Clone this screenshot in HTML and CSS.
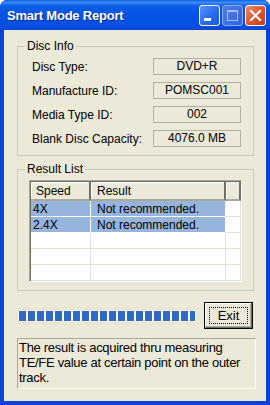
FILE: index.html
```html
<!DOCTYPE html>
<html lang="en">
<head>
  <meta charset="UTF-8">
  <title>Smart Mode Report</title>
  <link rel="stylesheet" href="styles.css">
</head>
<body>
  <div class="window">
    <div class="titlebar">
      <span class="title">Smart Mode Report</span>
      <div class="caption-buttons">
        <span class="cap-btn">
          <svg width="21" height="21" viewBox="0 0 21 21"><rect x="5" y="13" width="7" height="3" fill="#fff"/></svg>
        </span>
        <span class="cap-btn disabled">
          <svg width="21" height="21" viewBox="0 0 21 21"><rect x="5.5" y="5.5" width="10" height="10" fill="none" stroke="#a9bdf0" stroke-width="1"/><rect x="5" y="5" width="11" height="2" fill="#a9bdf0"/></svg>
        </span>
        <span class="cap-btn close">
          <svg width="21" height="21" viewBox="0 0 21 21"><path d="M6 6 L15 15 M15 6 L6 15" stroke="#fff" stroke-width="2.2" stroke-linecap="square"/></svg>
        </span>
      </div>
    </div>

    <div class="client">
      <fieldset class="group">
        <legend>Disc Info</legend>
        <div class="info-grid">
          <span class="label">Disc Type:</span>
          <span class="value">DVD+R</span>
          <span class="label">Manufacture ID:</span>
          <span class="value">POMSC001</span>
          <span class="label">Media Type ID:</span>
          <span class="value">002</span>
          <span class="label">Blank Disc Capacity:</span>
          <span class="value">4076.0 MB</span>
        </div>
      </fieldset>

      <fieldset class="group results">
        <legend>Result List</legend>
        <div class="listview">
          <div class="lv-row lv-header">
            <span class="col-speed">Speed</span>
            <span class="col-result">Result</span>
            <span class="col-rest"></span>
          </div>
          <div class="lv-row selected">
            <span class="col-speed">4X</span>
            <span class="col-result">Not recommended.</span>
            <span class="col-rest"></span>
          </div>
          <div class="lv-row selected">
            <span class="col-speed">2.4X</span>
            <span class="col-result">Not recommended.</span>
            <span class="col-rest"></span>
          </div>
          <div class="lv-row">
            <span class="col-speed"></span>
            <span class="col-result"></span>
            <span class="col-rest"></span>
          </div>
          <div class="lv-row">
            <span class="col-speed"></span>
            <span class="col-result"></span>
            <span class="col-rest"></span>
          </div>
          <div class="lv-row">
            <span class="col-speed"></span>
            <span class="col-result"></span>
            <span class="col-rest"></span>
          </div>
        </div>
      </fieldset>

      <div class="actions">
        <div class="progress"><div class="progress-fill"></div></div>
        <button class="exit-btn"><span class="focus">Exit</span></button>
      </div>

      <div class="note">The result is acquired thru measuring TE/FE value at certain point on the outer track.</div>
    </div>
  </div>
</body>
</html>
```

FILE: styles.css
```css
body {
  margin: 0;
  background: #ffffff;
  font-family: 'Liberation Sans', Arial, sans-serif;
  font-size: 12px;
  color: #000;
}

.window {
  width: 270px;
  height: 405px;
  display: flex;
  flex-direction: column;
  background: #0842d6;
  border-radius: 7px 7px 0 0;
  overflow: hidden;
}

.titlebar {
  height: 30px;
  flex: none;
  display: flex;
  align-items: center;
  justify-content: space-between;
  padding: 0 4px 0 7px;
  box-sizing: border-box;
  background: linear-gradient(to bottom, #0a5fe8 0%, #3d8cf7 8%, #0b5ce9 20%, #0453e4 50%, #0550e2 85%, #0a46cf 100%);
}

.title {
  color: #fff;
  font-weight: bold;
  font-size: 13px;
  letter-spacing: -0.2px;
  text-shadow: 1px 1px 0 #0b2a8a;
}

.caption-buttons {
  display: flex;
  gap: 2px;
}

.cap-btn {
  width: 21px;
  height: 21px;
  box-sizing: border-box;
  border: 1px solid #fff;
  border-radius: 3px;
  background: linear-gradient(135deg, #5a92f6 0%, #2c6ff0 50%, #1b55d9 100%);
  display: block;
  overflow: hidden;
}

.cap-btn svg {
  display: block;
  margin: -1px;
}

.cap-btn.disabled {
  border-color: #8aa9f0;
  background: linear-gradient(135deg, #4a7fe9 0%, #2f66df 100%);
}

.cap-btn.close {
  background: linear-gradient(135deg, #eb8f6c 0%, #e1572e 50%, #c5401d 100%);
}

.client {
  flex: 1;
  background: #ece9d8;
  margin: 0 4px 4px 4px;
  padding: 9px 12px 0 13px;
  display: flex;
  flex-direction: column;
}

.group {
  margin: 0;
  padding: 0;
  border: 1px solid #cdcabb;
  box-shadow: inset 0 0 0 0 #fff;
}

.group legend {
  margin-left: 7px;
  padding: 0 2px;
  font-size: 12px;
  line-height: 14px;
}

.info-grid {
  display: grid;
  grid-template-columns: 1fr 88px;
  grid-auto-rows: 17px;
  row-gap: 7px;
  align-items: center;
  padding: 5px 12px 8px 14px;
}

.value {
  height: 17px;
  box-sizing: border-box;
  border: 1px solid #b4b1a2;
  text-align: center;
  line-height: 15px;
}

.results {
  margin-top: 6px;
}

.listview {
  margin: 4px 11px 8px 11px;
  height: 102px;
  box-sizing: border-box;
  border: 1px solid #aca899;
  border-right-color: #fff;
  border-bottom-color: #fff;
  box-shadow: inset 1px 1px 0 #716f64;
  background: #fff;
  overflow: hidden;
  padding: 1px 0 0 1px;
}

.lv-row {
  display: flex;
  height: 16px;
  line-height: 16px;
}

.lv-row span {
  box-sizing: border-box;
  border-right: 1px solid #e3e1d9;
  border-bottom: 1px solid #e3e1d9;
  padding-left: 2px;
  white-space: nowrap;
}

.col-speed {
  width: 60px;
}

.col-result {
  width: 135px;
  padding-left: 6px !important;
}

.col-rest {
  flex: 1;
}

.lv-header {
  height: 19px;
  line-height: 18px;
}

.lv-header span {
  background: #ece9d8;
  border-right: 2px solid #716f64;
  border-bottom: 2px solid #aca899;
  box-shadow: inset 1px 1px 0 #fff;
  padding-left: 5px;
}

.lv-header .col-result {
  padding-left: 6px !important;
}

.lv-row.selected .col-speed,
.lv-row.selected .col-result {
  background: #96b4dc;
  border-color: #96b4dc #ffffff #ffffff #96b4dc;
}

.actions {
  display: flex;
  align-items: center;
  margin-top: 11px;
  margin-right: -2px;
}

.progress {
  width: 180px;
  height: 14px;
  box-sizing: border-box;
  border: 1px solid #e5e3d6;
  background: #fff;
  padding: 1px 1px;
}

.progress-fill {
  height: 100%;
  background: repeating-linear-gradient(to right, #3169c6 0, #3169c6 7px, #fff 7px, #fff 9px);
}

.exit-btn {
  margin-left: 7px;
  width: 49px;
  height: 27px;
  padding: 0;
  font-family: 'Liberation Sans', Arial, sans-serif;
  font-size: 13px;
  background: #ece9d8;
  border: 1px solid #000;
  box-shadow: inset -1px -1px 0 #716f64, inset 1px 1px 0 #fff, inset -2px -2px 0 #aca899;
  display: flex;
  align-items: center;
  justify-content: center;
}

.focus {
  display: block;
  width: 39px;
  height: 17px;
  box-sizing: border-box;
  border: 1px dotted #000;
  line-height: 15px;
  text-align: center;
}

.note {
  margin-top: 9px;
  margin-right: -2px;
  height: 51px;
  box-sizing: border-box;
  border: 1px solid #aca899;
  border-right-color: #fff;
  border-bottom-color: #fff;
  padding: 1px 2px 0 1px;
  font-size: 13px;
  line-height: 15px;
  letter-spacing: -0.3px;
}
```
